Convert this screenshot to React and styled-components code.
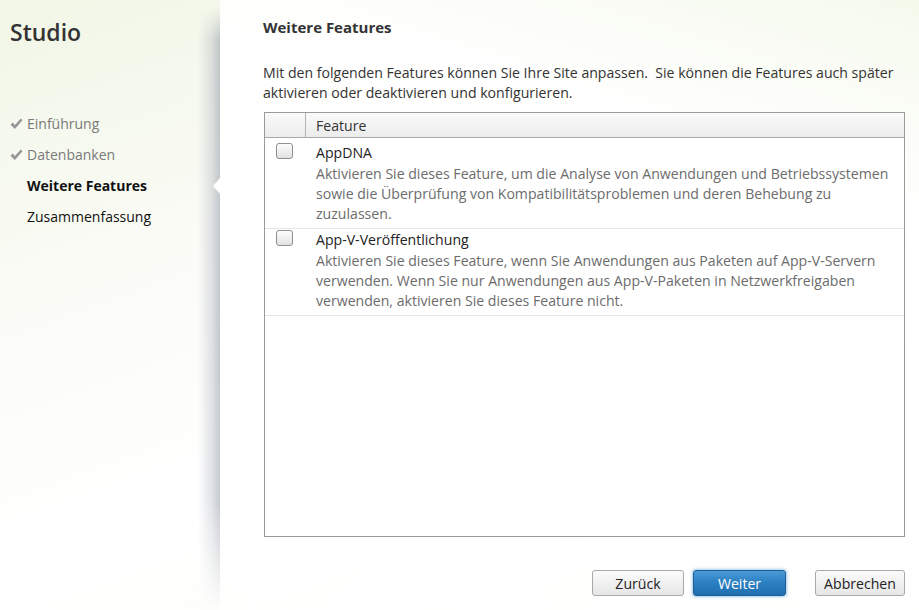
import React, { useState } from "react";
import styled, { createGlobalStyle } from "styled-components";

const GlobalStyle = createGlobalStyle`
  html, body {
    margin: 0;
    padding: 0;
  }
  body {
    font-family: "Open Sans", "Noto Sans", "Liberation Sans", sans-serif;
    font-size: 14px;
    color: #333;
    background: linear-gradient(160deg, #f1f6e6 0%, #fbfcf7 35%, #ffffff 60%, #fbfdf6 100%);
  }
`;

const steps = [
  { label: "Einführung", done: true },
  { label: "Datenbanken", done: true },
  { label: "Weitere Features", active: true },
  { label: "Zusammenfassung" },
];

const features = [
  {
    title: "AppDNA",
    lines: [
      "Aktivieren Sie dieses Feature, um die Analyse von Anwendungen und Betriebssystemen",
      "sowie die Überprüfung von Kompatibilitätsproblemen und deren Behebung zu",
      "zuzulassen.",
    ],
  },
  {
    title: "App-V-Veröffentlichung",
    lines: [
      "Aktivieren Sie dieses Feature, wenn Sie Anwendungen aus Paketen auf App-V-Servern",
      "verwenden. Wenn Sie nur Anwendungen aus App-V-Paketen in Netzwerkfreigaben",
      "verwenden, aktivieren Sie dieses Feature nicht.",
    ],
  },
];

const Check = () => (
  <svg width="13" height="12" viewBox="0 0 13 12">
    <path d="M0.5 6.8 L2.8 4.6 L4.9 6.9 L10.8 0.5 L12.5 2.2 L4.9 11 Z" fill="#979797" />
  </svg>
);

const App = () => {
  const [checked, setChecked] = useState({});

  return (
    <>
      <GlobalStyle />
      <Window>
        <Sidebar>
          <Brand>Studio</Brand>
          <StepList>
            {steps.map((s) => (
              <Step key={s.label} $done={s.done} $active={s.active}>
                <StepMark>{s.done && <Check />}</StepMark>
                {s.label}
              </Step>
            ))}
          </StepList>
          <Notch />
        </Sidebar>

        <Main>
          <Heading>Weitere Features</Heading>
          <Intro>
            Mit den folgenden Features können Sie Ihre Site anpassen.&nbsp; Sie können die Features auch später
            <br />
            aktivieren oder deaktivieren und konfigurieren.
          </Intro>

          <Table>
            <HeadRow>
              <HeadCell />
              <HeadCell $label>Feature</HeadCell>
            </HeadRow>
            {features.map((f, i) => (
              <Row key={f.title} $first={i === 0}>
                <BoxCell>
                  <Box
                    $on={checked[f.title]}
                    onClick={() => setChecked({ ...checked, [f.title]: !checked[f.title] })}
                  />
                </BoxCell>
                <TextCell>
                  <FeatureTitle>{f.title}</FeatureTitle>
                  {f.lines.map((l) => (
                    <FeatureLine key={l}>{l}</FeatureLine>
                  ))}
                </TextCell>
              </Row>
            ))}
          </Table>

          <Footer>
            <Button $w={92}>Zurück</Button>
            <Button $w={93} $primary>Weiter</Button>
            <Button $w={90} $gap>Abbrechen</Button>
          </Footer>
        </Main>
      </Window>
    </>
  );
};

export default App;

const Window = styled.div`
  display: grid;
  grid-template-columns: 220px 1fr;
  width: 919px;
  height: 610px;
  overflow: hidden;
`;

const Sidebar = styled.aside`
  position: relative;
  padding: 16px 0 0 10px;

  &::after {
    content: "";
    position: absolute;
    top: 0;
    right: 0;
    bottom: 0;
    width: 22px;
    background: linear-gradient(to right, rgba(160, 166, 180, 0) 0%, rgba(160, 166, 180, 0.3) 60%, rgba(150, 156, 170, 0.55) 100%);
    -webkit-mask-image: linear-gradient(to bottom, transparent 8px, #000 40px, #000 500px, transparent 610px);
    mask-image: linear-gradient(to bottom, transparent 8px, #000 40px, #000 500px, transparent 610px);
  }
`;

const Notch = styled.div`
  position: absolute;
  right: 0;
  top: 178px;
  width: 0;
  height: 0;
  border-top: 8px solid transparent;
  border-bottom: 8px solid transparent;
  border-right: 7px solid #ffffff;
  z-index: 1;
`;

const Brand = styled.h1`
  margin: 0;
  font-size: 23px;
  font-weight: 600;
  color: #333;
  line-height: 32px;
`;

const StepList = styled.ul`
  list-style: none;
  margin: 60px 0 0;
  padding: 0;
`;

const Step = styled.li`
  display: flex;
  align-items: center;
  height: 31px;
  font-size: 14px;
  color: ${(p) => (p.$done ? "#7a7a7a" : "#111")};
  font-weight: ${(p) => (p.$active ? 700 : 400)};
`;

const StepMark = styled.span`
  display: inline-flex;
  width: 17px;
  align-items: center;
`;

const Main = styled.main`
  display: flex;
  flex-direction: column;
  padding: 16px 14px 14px 43px;
  background: linear-gradient(200deg, rgba(244, 249, 234, 0.8) 0%, rgba(255, 255, 255, 0.9) 25%, #fff 60%, rgba(255, 255, 255, 0.6) 100%);
`;

const Heading = styled.h2`
  margin: 0;
  font-size: 15px;
  font-weight: 700;
  color: #333;
  line-height: 22px;
`;

const Intro = styled.p`
  margin: 25px 0 9px;
  line-height: 20px;
  font-size: 14.1px;
  color: #333;
  white-space: nowrap;
`;

const Table = styled.div`
  flex: 1;
  margin-left: 1px;
  border: 1px solid #9a9a9a;
  background: #fff;
`;

const HeadRow = styled.div`
  display: grid;
  grid-template-columns: 40px 1fr;
  height: 24px;
  border-bottom: 1px solid #a8a8a8;
  background: linear-gradient(to bottom, #fafafa, #ececec);
`;

const HeadCell = styled.div`
  display: flex;
  align-items: center;
  padding-left: ${(p) => (p.$label ? "10px" : "0")};
  border-left: ${(p) => (p.$label ? "1px solid #b4b4b4" : "none")};
  font-size: 14.1px;
  color: #333;
`;

const Row = styled.div`
  display: grid;
  grid-template-columns: 51px 1fr;
  border-bottom: 1px solid #e6e6e6;
  padding: ${(p) => (p.$first ? "4px" : "0")} 0 4px;
`;

const BoxCell = styled.div`
  padding: 1px 0 0 11px;
`;

const Box = styled.span`
  display: block;
  width: 15px;
  height: 14px;
  border: 1px solid #8e8f8f;
  border-radius: 3px;
  background: ${(p) => (p.$on ? "#cfe6f7" : "linear-gradient(to bottom, #fdfdfd, #e2e2e2)")};
  cursor: pointer;
`;

const TextCell = styled.div`
  white-space: nowrap;
`;

const FeatureTitle = styled.div`
  font-size: 14.1px;
  line-height: 22px;
  color: #222;
`;

const FeatureLine = styled.div`
  font-size: 14.1px;
  line-height: 20px;
  color: #6c6c6c;
`;

const Footer = styled.div`
  display: flex;
  justify-content: flex-end;
  gap: 9px;
  margin-top: 33px;
`;

const Button = styled.button`
  width: ${(p) => p.$w}px;
  height: 26px;
  margin-left: ${(p) => (p.$gap ? "20px" : "0")};
  padding: 0;
  border-radius: 3px;
  font-family: inherit;
  font-size: 14.1px;
  cursor: pointer;
  color: ${(p) => (p.$primary ? "#fff" : "#222")};
  border: 1px solid ${(p) => (p.$primary ? "#1d5f94" : "#a9a9a9")};
  background: ${(p) =>
    p.$primary
      ? "linear-gradient(to bottom, #4a9ad6 0%, #2a7fc2 50%, #1f6fb0 100%)"
      : "linear-gradient(to bottom, #fbfbfb, #e6e6e6)"};
  box-shadow: ${(p) => (p.$primary ? "0 0 3px 1px rgba(80, 160, 220, 0.55)" : "none")};
`;
